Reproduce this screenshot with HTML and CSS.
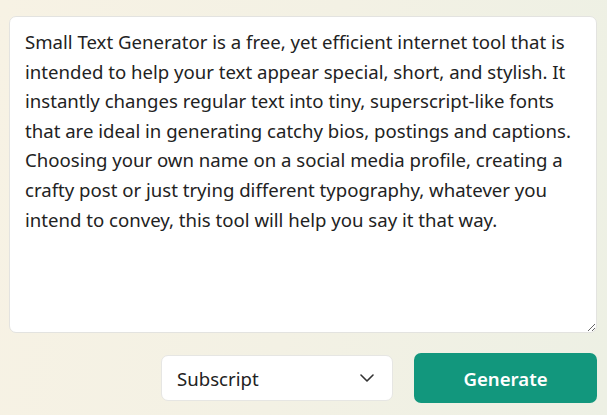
FILE: index.html
```html
<!DOCTYPE html>
<html lang="en">
<head>
<meta charset="utf-8">
<title>Small Text Generator</title>
<link rel="stylesheet" href="styles.css">
</head>
<body>
<main class="tool">
  <textarea class="input" spellcheck="false">Small Text Generator is a free, yet efficient internet tool that is intended to help your text appear special, short, and stylish. It instantly changes regular text into tiny, superscript-like fonts that are ideal in generating catchy bios, postings and captions. Choosing your own name on a social media profile, creating a crafty post or just trying different typography, whatever you intend to convey, this tool will help you say it that way.</textarea>
  <div class="controls">
    <div class="select">
      <span class="select-label">Subscript</span>
      <svg class="chevron" width="14" height="8" viewBox="0 0 14 8" aria-hidden="true"><path d="M1 1l6 6 6-6" fill="none" stroke="#333" stroke-width="1.6" stroke-linecap="round" stroke-linejoin="round"/></svg>
    </div>
    <button class="generate" type="button">Generate</button>
  </div>
</main>
</body>
</html>
```

FILE: styles.css
```css
* { box-sizing: border-box; }
html, body { margin: 0; height: 100%; }
body {
  background: linear-gradient(100deg, #f7f2e4 0%, #f3f1e4 50%, #edf0e4 100%);
  font-family: "Noto Sans", "Open Sans", sans-serif;
  color: #222;
}
.tool {
  padding: 16px 10px 0 9px;
  display: flex;
  flex-direction: column;
  gap: 20px;
}
.input {
  display: block;
  width: 100%;
  height: 317px;
  border: 1px solid #e3e3e0;
  border-radius: 7px;
  background: #fff;
  padding: 10px 14px 12px 15px;
  font-family: inherit;
  font-size: 18.6px;
  line-height: 29.6px;
  color: #222;
  resize: vertical;
  outline: none;
}
.controls {
  display: flex;
  justify-content: flex-end;
  align-items: center;
  gap: 21px;
}
.select {
  width: 232px;
  height: 46px;
  background: #fff;
  border: 1px solid #e6e6e3;
  border-radius: 7px;
  display: flex;
  align-items: center;
  justify-content: space-between;
  padding: 0 18px 0 15px;
  font-size: 18.6px;
  color: #222;
}
.generate {
  width: 183px;
  height: 50px;
  border: none;
  border-radius: 7px;
  background: #12977d;
  color: #fff;
  font-family: inherit;
  font-size: 18.6px;
  font-weight: 600;
}
```
